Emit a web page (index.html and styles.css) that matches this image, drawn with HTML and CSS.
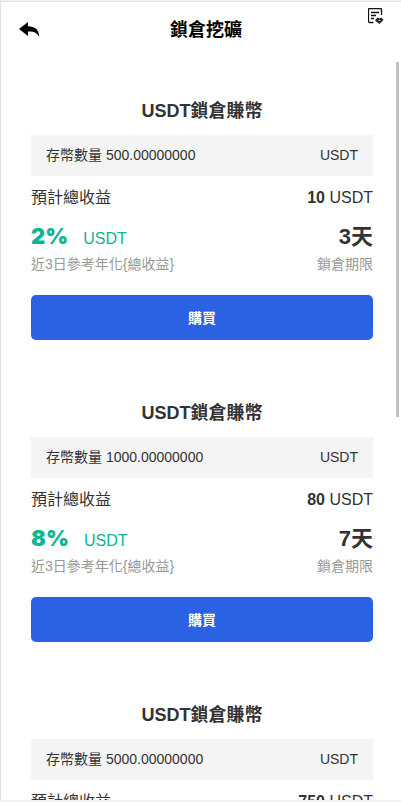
FILE: index.html
```html
<!DOCTYPE html>
<html lang="zh-Hant">
<head>
<meta charset="utf-8">
<meta name="viewport" content="width=device-width, initial-scale=1">
<title>鎖倉挖礦</title>
<link rel="stylesheet" href="styles.css">
</head>
<body>
<div class="app">
  <header class="topbar">
    <button class="icon-button back" type="button" aria-label="返回">
      <svg width="21" height="16" viewBox="0 0 21 16" aria-hidden="true"><path d="M0 7 9 0v4.300C15.500 4.200 20 7.500 20.300 14.800C17.500 10.300 14 9.300 9 9.500V14Z"/></svg>
    </button>
    <h1 class="topbar-title">鎖倉挖礦</h1>
    <button class="icon-button orders" type="button" aria-label="訂單">
      <svg width="16" height="17" viewBox="0 0 16 17" aria-hidden="true"><path d="M5.500 14.500H1.500Q.5 14.500.5 13.500V1.500Q.5.500 1.500.5H12.500Q13.500.5 13.500 1.500V7M3 4.500H11M3 7.500H8M3 10.500H6" fill="none" stroke="#111" stroke-width="1.300"/><path d="M7 12.500 9.500 9.500 11.500 10.500 13.500 9.500 15.500 12 11.500 16Z" fill="#222"/><path d="M10.500 12.500h2" stroke="#fff" stroke-width=".8"/></svg>
    </button>
  </header>
  <main class="content">
    <section class="plan">
      <h2 class="plan-title">USDT鎖倉賺幣</h2>
      <div class="amount"><span>存幣數量 500.00000000</span><span>USDT</span></div>
      <div class="income"><span>預計總收益</span><span><b>10</b> USDT</span></div>
      <div class="rates"><span class="rate"><strong>2%</strong><span>USDT</span></span><span class="term">3天</span></div>
      <div class="captions"><span>近3日參考年化{總收益}</span><span>鎖倉期限</span></div>
      <button class="buy" type="button">購買</button>
    </section>
    <section class="plan">
      <h2 class="plan-title">USDT鎖倉賺幣</h2>
      <div class="amount"><span>存幣數量 1000.00000000</span><span>USDT</span></div>
      <div class="income"><span>預計總收益</span><span><b>80</b> USDT</span></div>
      <div class="rates"><span class="rate"><strong>8%</strong><span>USDT</span></span><span class="term">7天</span></div>
      <div class="captions"><span>近3日參考年化{總收益}</span><span>鎖倉期限</span></div>
      <button class="buy" type="button">購買</button>
    </section>
    <section class="plan">
      <h2 class="plan-title">USDT鎖倉賺幣</h2>
      <div class="amount"><span>存幣數量 5000.00000000</span><span>USDT</span></div>
      <div class="income"><span>預計總收益</span><span><b>750</b> USDT</span></div>
    </section>
  </main>
  <div class="scroll-thumb"></div>
</div>
</body>
</html>
```
FILE: styles.css
```css
* {
  box-sizing: border-box;
}

body {
  margin: 0;
  background: #f2f2f2;
  color: #333;
  font-family: "Liberation Sans", "Noto Sans CJK TC", sans-serif;
}

.app {
  position: relative;
  display: flex;
  flex-direction: column;
  height: 100vh;
  border-top: 1px solid #f2f2f2;
  border-bottom: 2px solid #f2f2f2;
  background: #fff;
  box-shadow: inset 1px 1px #e0e0e0;
}

.topbar {
  display: flex;
  flex: none;
  justify-content: space-between;
  align-items: center;
  height: 58px;
  padding: 0 17px 0 19px;
}

.topbar-title {
  margin: 0;
  color: #000;
  font-size: 18px;
  line-height: 24px;
}

.icon-button {
  display: flex;
  padding: 0;
  border: 0;
  background: none;
}

.back {
  width: 25px;
}

.orders {
  align-self: flex-start;
  padding-top: 7px;
}

.content {
  flex: 1;
  min-height: 0;
  overflow: hidden;
  padding: 0 28px 0 31px;
}

.plan {
  padding-top: 36px;
  margin-bottom: 21px;
}

.plan-title {
  margin: 0 0 8px;
  font-size: 18px;
  line-height: 32px;
  text-align: center;
}

.amount,
.income,
.rates,
.captions {
  display: flex;
  justify-content: space-between;
  align-items: baseline;
}

.amount {
  height: 41px;
  padding: 0 15px;
  background: #f4f4f4;
  font-size: 14px;
  line-height: 40px;
}

.income {
  height: 42px;
  font-size: 16px;
  line-height: 44px;
}

.rates {
  height: 36px;
  line-height: 36px;
}

.rate {
  display: flex;
  align-items: baseline;
  gap: 15px;
  color: #0db592;
  font-size: 16px;
}

.rate strong {
  font-family: Inter, sans-serif;
  font-size: 22px;
  font-weight: 900;
}

.term {
  font-size: 22px;
  font-weight: bold;
}

.captions {
  height: 20px;
  color: #999;
  font-size: 14px;
  line-height: 20px;
}

.buy {
  display: block;
  width: 100%;
  height: 45px;
  margin-top: 21px;
  padding: 0 0 2px;
  border: 0;
  border-radius: 5px;
  background: #2b62e3;
  color: #fff;
  font: inherit;
  font-size: 14px;
  font-weight: bold;
}

.scroll-thumb {
  position: absolute;
  top: 61px;
  right: 2px;
  width: 3px;
  height: 355px;
  background: #c1c1c1;
}
```
